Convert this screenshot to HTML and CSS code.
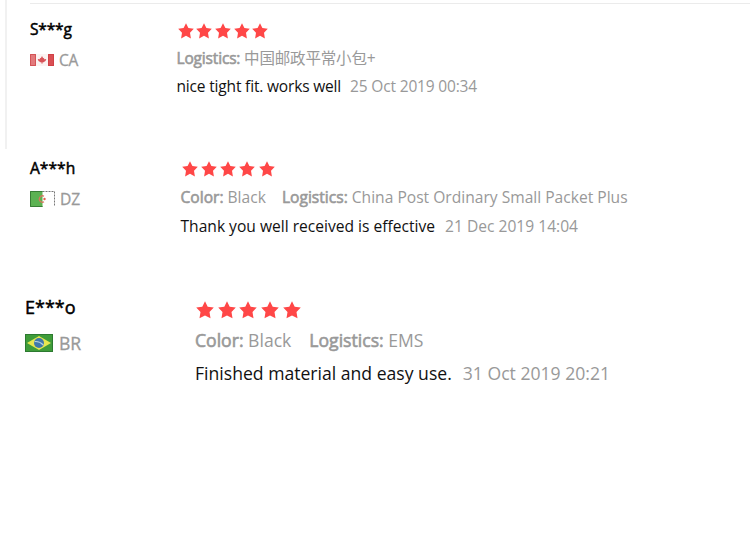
FILE: index.html
```html
<!DOCTYPE html>
<html lang="en">
<head>
    <meta charset="UTF-8">
    <meta name="viewport" content="width=device-width, initial-scale=1.0">
    <title>Customer Reviews</title>
    <link rel="stylesheet" href="styles.css">
</head>
<body>
    <svg class="sprite" width="0" height="0">
        <symbol id="star" viewBox="0 0 16 16">
            <path d="M8 0.2 L10.4 5.1 L15.8 5.8 L12 9.7 L12.9 15.4 L8 12.8 L3.1 15.4 L4 9.7 L0.2 5.8 L5.6 5.1 Z"/>
        </symbol>
    </svg>

    <div class="review review-first">
        <div class="user">
            <div class="name">S***g</div>
            <div class="country">
                <svg class="flag" viewBox="0 0 24 12">
                    <rect width="24" height="12" fill="#fbf3f2"/>
                    <rect width="6" height="12" fill="#e27a7c"/>
                    <rect x="18" width="6" height="12" fill="#d94f54"/>
                    <path d="M0.5 0.5H5.5V11.5H0.5ZM18.5 0.5H23.5V11.5H18.5Z" fill="none" stroke="#c9383d" stroke-opacity="0.6"/>
                    <path d="M12 2 L13.2 4.2 L14.2 3.8 L14 5.3 L16.3 5 L15.5 7 L13 8.6 L12.3 8.4 V10 H11.7 V8.4 L11 8.6 L8.5 7 L7.7 5 L10 5.3 L9.8 3.8 L10.8 4.2 Z" fill="#d85358"/>
                </svg>
                <span class="code">CA</span>
            </div>
        </div>
        <div class="content">
            <div class="stars">
                <svg><use href="#star"/></svg>
                <svg><use href="#star"/></svg>
                <svg><use href="#star"/></svg>
                <svg><use href="#star"/></svg>
                <svg><use href="#star"/></svg>
            </div>
            <div class="info">
                <span class="option"><span class="label">Logistics:</span> 中国邮政平常小包+</span>
            </div>
            <div class="feedback">
                <span class="text">nice tight fit. works well</span>
                <span class="date">25 Oct 2019 00:34</span>
            </div>
        </div>
    </div>

    <div class="review review-second">
        <div class="user">
            <div class="name">A***h</div>
            <div class="country">
                <svg class="flag" viewBox="0 0 25 16">
                    <rect width="25" height="16" fill="#ffffff"/>
                    <rect width="12.5" height="16" fill="#5cb252"/>
                    <path d="M12.5 0.5H24.5V15.5" fill="none" stroke="#777777" stroke-dasharray="2 1"/>
                    <path d="M12.5 0.5H0.5V15.5H12.5" fill="none" stroke="#397d35"/>
                    <path d="M14 5.2A3.2 3.2 0 1 0 14 10.8" fill="none" stroke="#d8765e" stroke-width="1.3"/>
                    <circle cx="14.5" cy="8" r="1.2" fill="#e0604f"/>
                </svg>
                <span class="code">DZ</span>
            </div>
        </div>
        <div class="content">
            <div class="stars">
                <svg><use href="#star"/></svg>
                <svg><use href="#star"/></svg>
                <svg><use href="#star"/></svg>
                <svg><use href="#star"/></svg>
                <svg><use href="#star"/></svg>
            </div>
            <div class="info">
                <span class="option"><span class="label">Color:</span> Black</span>
                <span class="option"><span class="label">Logistics:</span> China Post Ordinary Small Packet Plus</span>
            </div>
            <div class="feedback">
                <span class="text">Thank you well received is effective</span>
                <span class="date">21 Dec 2019 14:04</span>
            </div>
        </div>
    </div>

    <div class="review review-third">
        <div class="user">
            <div class="name">E***o</div>
            <div class="country">
                <svg class="flag" viewBox="0 0 28 18">
                    <rect width="28" height="18" fill="#3f9c3a"/>
                    <rect x="0.5" y="0.5" width="27" height="17" fill="none" stroke="#2c7a30"/>
                    <path d="M14 2 L26 9 L14 16 L2 9 Z" fill="#e6e650"/>
                    <circle cx="14" cy="9" r="5" fill="#3f78ab"/>
                    <path d="M9.6 7.6Q14.5 7 18.3 11" fill="none" stroke="#b5d0e0" stroke-width="1.2"/>
                </svg>
                <span class="code">BR</span>
            </div>
        </div>
        <div class="content">
            <div class="stars">
                <svg><use href="#star"/></svg>
                <svg><use href="#star"/></svg>
                <svg><use href="#star"/></svg>
                <svg><use href="#star"/></svg>
                <svg><use href="#star"/></svg>
            </div>
            <div class="info">
                <span class="option"><span class="label">Color:</span> Black</span>
                <span class="option"><span class="label">Logistics:</span> EMS</span>
            </div>
            <div class="feedback">
                <span class="text">Finished material and easy use.</span>
                <span class="date">31 Oct 2019 20:21</span>
            </div>
        </div>
    </div>
</body>
</html>
```
FILE: styles.css
```css
body {
    margin: 0;
    background: #fff;
    font-family: "Open Sans", "Noto Sans CJK SC", sans-serif;
    font-size: 15.6px;
    color: #111;
}

.sprite {
    display: block;
}

.review {
    display: grid;
    box-sizing: border-box;
    white-space: nowrap;
}

.name {
    height: 28px;
    line-height: 28px;
    color: #000;
    -webkit-text-stroke: 0.5px #000;
}

.country {
    display: flex;
    align-items: center;
    height: 34px;
    gap: 5px;
    color: #999;
}

.code {
    -webkit-text-stroke: 0.3px #999;
}

.flag {
    display: block;
    width: 24px;
    height: 12px;
}

.stars {
    display: flex;
    align-items: center;
    height: 30px;
    gap: 3px;
    padding-left: 1px;
}

.stars svg {
    width: 16px;
    height: 16px;
    fill: #ff4747;
}

.info {
    display: flex;
    gap: 16px;
    height: 27px;
    line-height: 27px;
    color: #999;
}

.label {
    -webkit-text-stroke: 0.6px #999;
}

.feedback {
    display: flex;
    gap: 10px;
    height: 30px;
    line-height: 30px;
}

.date {
    color: #999;
}

.review-first {
    grid-template-columns: 146.5px 1fr;
    height: 149px;
    margin-left: 5px;
    padding: 15px 0 0 23px;
    border-left: 2px solid #f1f1f1;
    background: linear-gradient(#ebebeb, #ebebeb) 23px 3px / 100% 1px no-repeat;
    font-size: 15.5px;
    letter-spacing: -0.17px;
}

.review-first .stars {
    height: 31px;
    gap: 2.7px;
}

.review-first .info {
    height: 25px;
    line-height: 25px;
}

.review-first .feedback {
    gap: 9px;
}

.review-second {
    grid-template-columns: 150.5px 1fr;
    height: 143px;
    padding: 5px 0 0 30px;
}

.review-second .stars {
    gap: 3.3px;
}

.review-second .flag {
    width: 25px;
    height: 16px;
}

.review-third {
    grid-template-columns: 170px 1fr;
    padding: 0 0 0 25px;
    font-size: 17.6px;
}

.review-third .name {
    height: 31px;
    line-height: 31px;
    font-size: 18px;
}

.review-third .country {
    height: 39px;
    gap: 6px;
}

.review-third .flag {
    width: 28px;
    height: 18px;
}

.review-third .stars {
    height: 35px;
    gap: 3.7px;
}

.review-third .stars svg {
    width: 18px;
    height: 18px;
}

.review-third .info {
    gap: 18px;
    height: 26px;
    line-height: 26px;
}

.review-third .feedback {
    gap: 11px;
    height: 40px;
    line-height: 40px;
}
```
